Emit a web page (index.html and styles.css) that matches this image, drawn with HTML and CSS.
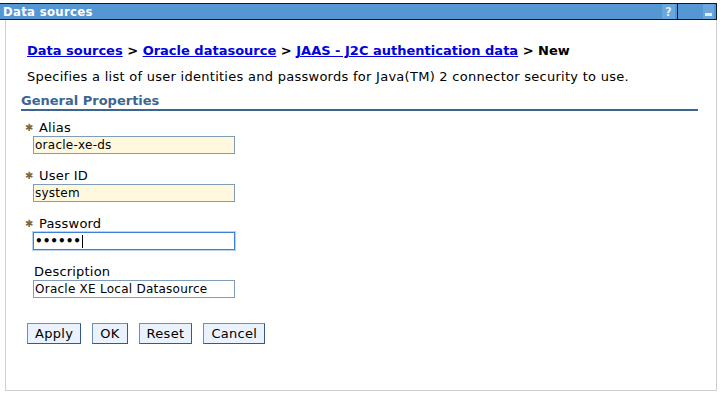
FILE: index.html
```html
<!DOCTYPE html>
<html>
<head>
<meta charset="utf-8">
<link rel="stylesheet" href="styles.css">
</head>
<body>
<div class="portlet">
  <div class="titlebar">
    <span class="title">Data sources</span>
    <span class="tools">
      <span class="tool help">?</span>
      <span class="sep"></span>
      <span class="tool min"><span class="bar"></span></span>
    </span>
  </div>
  <div class="body">
    <div class="crumbs"><a href="#">Data sources</a> &gt; <a href="#">Oracle datasource</a> &gt; <a href="#">JAAS - J2C authentication data</a> &gt; New</div>
    <div class="desc">Specifies a list of user identities and passwords for Java(TM) 2 connector security to use.</div>
    <div class="section">General Properties</div>
    <div class="fields">
      <div class="field">
        <div class="label"><span class="req">&#10033;</span>Alias</div>
        <input class="inp reqbg" type="text" value="oracle-xe-ds">
      </div>
      <div class="field">
        <div class="label"><span class="req">&#10033;</span>User ID</div>
        <input class="inp reqbg" type="text" value="system">
      </div>
      <div class="field">
        <div class="label"><span class="req">&#10033;</span>Password</div>
        <div class="inp focus"><span class="dots">&#8226;&#8226;&#8226;&#8226;&#8226;&#8226;</span><span class="caret"></span></div>
      </div>
      <div class="field">
        <div class="label">Description</div>
        <input class="inp" type="text" value="Oracle XE Local Datasource">
      </div>
    </div>
    <div class="buttons">
      <button class="btn">Apply</button>
      <button class="btn">OK</button>
      <button class="btn">Reset</button>
      <button class="btn">Cancel</button>
    </div>
  </div>
</div>
</body>
</html>
```
FILE: styles.css
```css
html, body { margin: 0; padding: 0; background: #fff; }
body { font-family: "DejaVu Sans", Verdana, sans-serif; font-size: 13px; color: #000; }
.portlet { width: 717px; padding-top: 3px; }
.titlebar {
  height: 15px;
  background: #5596d4;
  border-top: 1px solid #0c1a2a;
  border-bottom: 1px solid #0c1a2a;
  border-right: 1px solid #0c1a2a;
  display: flex; align-items: center; justify-content: space-between;
}
.title { font-family: "DejaVu Sans Condensed", sans-serif; font-weight: bold; font-size: 13px; color: #fff; padding-left: 3px; letter-spacing: 0.3px; }
.tools { display: flex; align-items: stretch; height: 15px; }
.tool { width: 13px; display: flex; align-items: center; justify-content: center; background: #6aa5db; }
.help { color: #dfeaf6; font-weight: bold; font-size: 13px; font-family: "DejaVu Sans Condensed", sans-serif; margin-right: 2px; }
.sep { width: 1px; background: #0c1a2a; margin-right: 25px; }
.min { width: 11px; margin-right: 2px; align-items: flex-end; padding-bottom: 3px; box-sizing: border-box; }
.bar { display: block; width: 7px; height: 3px; background: #e4eef8; }
.body {
  box-sizing: border-box;
  margin-left: 5px;
  border-left: 1px solid #cfcfcf;
  border-right: 1px solid #cfcfcf;
  border-bottom: 1px solid #cfcfcf;
  height: 371px;
  padding: 23px 18px 0 15px;
}
.crumbs { font-weight: bold; padding-left: 6px; line-height: 16px; }
.crumbs a { color: #0000e0; }
.desc { padding-left: 6px; margin-top: 10px; line-height: 16px; letter-spacing: 0.27px; }
.section { font-weight: bold; color: #3c6592; border-bottom: 2px solid #3c6592; margin-top: 8px; line-height: 16px; padding-bottom: 0px; }
.fields { margin-top: 9px; padding-left: 4px; }
.field { margin-bottom: 14px; }
.label { line-height: 16px; padding-left: 9px; letter-spacing: 0.2px; }
.req { display: inline-block; width: 14px; margin-left: -9px; color: #7a6a3a; font-size: 10px; vertical-align: top; }
.inp {
  display: block; box-sizing: border-box;
  width: 202px; height: 18px; margin-left: 8px;
  border: 1px solid #7f9db9; background: #fff;
  font-family: "DejaVu Sans", sans-serif; font-size: 12px; letter-spacing: 0.25px; padding: 0 1px; color: #000;
}
.reqbg { background: #fff8de; }
.focus { border-color: #3b7fd6; border-width: 1px; box-shadow: 0 0 0 1px #b9d2f0; display: flex; align-items: center; }
.dots { font-size: 12px; letter-spacing: 0; line-height: 16px; font-weight: bold; }
.caret { display: inline-block; width: 1px; height: 13px; background: #000; margin-left: 1px; }
.buttons { display: flex; gap: 11px; margin-top: 25px; padding-left: 6px; }
.btn {
  font-family: "DejaVu Sans", sans-serif; font-size: 13px; color: #000; letter-spacing: 0.3px;
  background: #eaf2fd; border: 1px solid #6f8fb5; border-bottom-color: #36598a; border-right-color: #36598a;
  height: 21px; padding: 0 7px; margin: 0; min-width: 35px;
}
```
